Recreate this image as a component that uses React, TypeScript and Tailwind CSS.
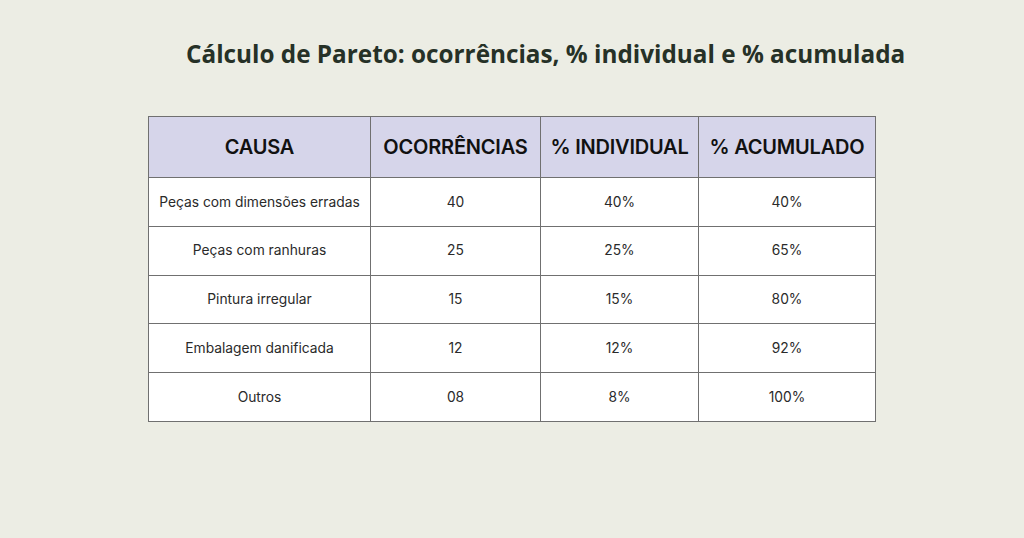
const rows = [
  ["Peças com dimensões erradas", "40", "40%", "40%"],
  ["Peças com ranhuras", "25", "25%", "65%"],
  ["Pintura irregular", "15", "15%", "80%"],
  ["Embalagem danificada", "12", "12%", "92%"],
  ["Outros", "08", "8%", "100%"],
]

const headers = ["CAUSA", "OCORRÊNCIAS", "% INDIVIDUAL", "% ACUMULADO"]
const widths = ["w-[222px]", "w-[170px]", "w-[158px]", "w-[177px]"]

export default function App() {
  return (
    <div className="h-[538px] w-[1024px] bg-[#ecede4] font-['Inter',sans-serif]">
      <h1 className="pt-[38px] pl-[186px] text-[24.3px] leading-[32px] font-bold text-[#263127] font-['Open_Sans',sans-serif]">
        Cálculo de Pareto: ocorrências, % individual e % acumulada
      </h1>
      <table className="ml-[148px] mt-[46px] border-collapse table-fixed w-[728px]">
        <thead>
          <tr className="bg-[#d6d5ea] h-[61px]">
            {headers.map((h, i) => (
              <th
                key={h}
                className={`${widths[i]} border border-[#707070] text-[20px] font-semibold text-[#111] tracking-[-0.2px]`}
              >
                {h}
              </th>
            ))}
          </tr>
        </thead>
        <tbody>
          {rows.map((r) => (
            <tr key={r[0]} className="bg-white h-[48.8px]">
              {r.map((c, i) => (
                <td key={i} className="border border-[#707070] text-center text-[13.8px] text-[#2a2a2a]">
                  {c}
                </td>
              ))}
            </tr>
          ))}
        </tbody>
      </table>
    </div>
  )
}
